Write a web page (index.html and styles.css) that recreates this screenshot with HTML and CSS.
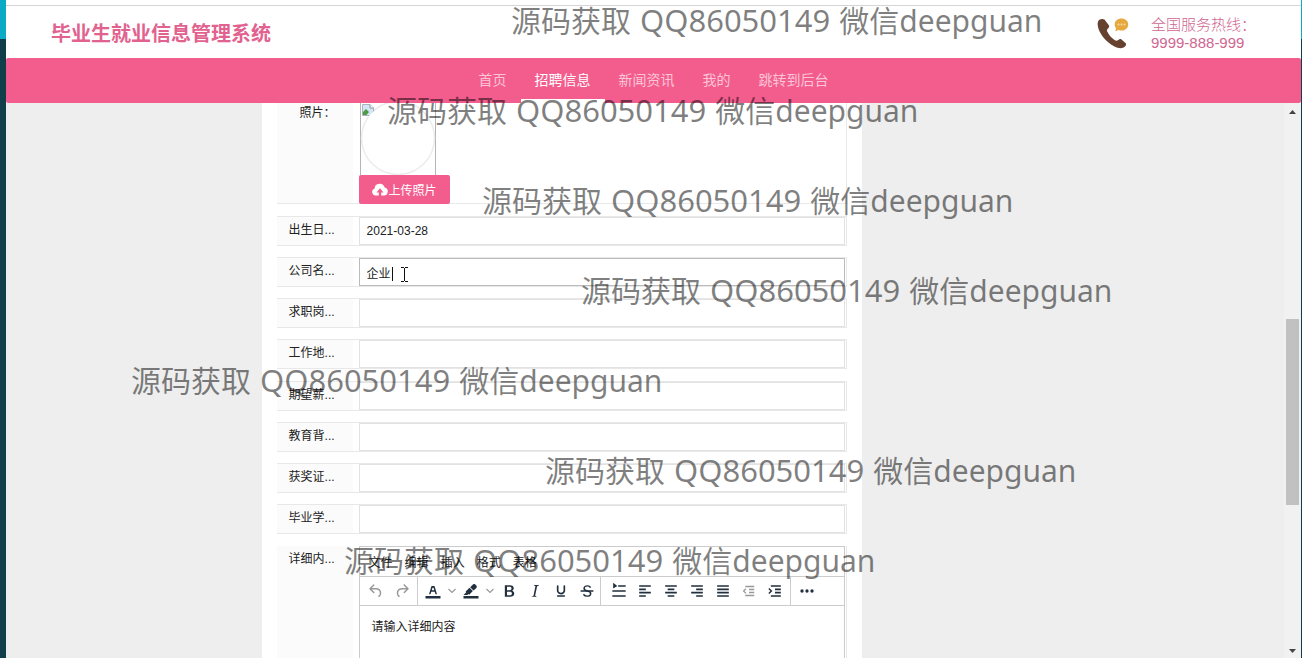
FILE: index.html
```html
<!DOCTYPE html>
<html lang="zh-CN">
<head>
<meta charset="utf-8">
<title>毕业生就业信息管理系统</title>
<link rel="stylesheet" href="styles.css">
</head>
<body>
<div class="desktop">
  <div class="app">
    <header class="header">
      <h1 class="brand">毕业生就业信息管理系统</h1>
      <div class="hotline">
        <svg class="hotline-icon" width="32" height="32" viewBox="0 0 32 32" aria-hidden="true">
          <path fill="#67412f" d="M2 2C3.500 1 6 0.600 7.500 1.600L12 7.500C12.500 8.500 12 9.500 11 10.500C9.500 12 9.800 13 10.500 14C12 17 14.500 20 17.500 22C19 23 20 23 21.300 22C22.500 21 23.500 20.800 24.500 21.500L28.500 25C29.500 26 29 27.500 28 28.500C25.500 31 21.500 30.600 17.500 28.500C9 24 2.500 16 1 9C0.400 6 0.500 3.500 2 2Z"/>
          <path fill="#e5a93f" d="M24.500 0.500C28.300 0.500 31.200 3 31.200 6.500S28.300 12.600 24.500 12.600C23.500 12.600 22.500 12.500 21.700 12.100L18.300 13.300L19 10.200C18.200 9.200 17.700 8 17.700 6.500C17.700 3 20.700 0.500 24.500 0.500Z"/>
          <g fill="#f9dda4"><circle cx="21.500" cy="6.500" r="1"/><circle cx="24.500" cy="6.500" r="1"/><circle cx="27.500" cy="6.500" r="1"/></g>
        </svg>
        <p class="hotline-text">全国服务热线：<br>9999-888-999</p>
      </div>
    </header>
    <nav class="nav">
      <a href="#">首页</a>
      <a href="#" class="active">招聘信息</a>
      <a href="#">新闻资讯</a>
      <a href="#">我的</a>
      <a href="#">跳转到后台</a>
    </nav>
    <div class="viewport">
      <main class="content">
        <form class="panel">
          <div class="row photo-row">
            <span class="label photo-label">照片：</span>
            <div class="photo-field">
              <svg class="photo" width="76" height="72" viewBox="0 0 76 72" role="img" aria-label="照片">
                <path d="M.5 0V72M75.500 0V72" stroke="#b5b5b5"/>
                <circle cx="38" cy="35" r="36.500" fill="none" stroke="#ececec" stroke-width="1.500"/>
                <path d="M2.500 1.500H10L13.500 5V12.500H2.500Z" fill="#d5e5f6" stroke="#aab3bd"/>
                <path d="M3 12V9L6 6L9 9L6.500 12Z" fill="#4b9b43"/><path d="M8 14L14 8V14Z" fill="#fff"/><path d="M10 1.500V5H13.500" fill="#fff" stroke="#8f999f"/>
              </svg>
              <button type="button" class="upload">
                <svg width="16" height="14" viewBox="0 0 16 14" aria-hidden="true"><path fill="#fff" fill-rule="evenodd" d="M4 12.500A3.600 3.600 0 0 1 2.600 5.500A5.100 5.100 0 0 1 12.600 4.600A4 4 0 0 1 12 12.500H9.200V9.500H11.500L8 5.200L4.500 9.500H6.800V12.500Z"/></svg>上传照片
              </button>
            </div>
          </div>
          <div class="group">
            <div class="row"><label class="label" for="birth">出生日...</label><input id="birth" type="text" value="2021-03-28"></div>
            <div class="row"><label class="label" for="company">公司名...</label><input id="company" class="focused" type="text" value="企业">
              <svg class="pointer" width="20" height="18" viewBox="0 0 20 18" aria-hidden="true"><path d="M1.500 2V16M10 2.500H13M14 2.500H17M13.500 3V16M10 16.500H13M14 16.500H17" fill="none" stroke="#111"/></svg>
            </div>
            <div class="row"><label class="label" for="job">求职岗...</label><input id="job" type="text"></div>
            <div class="row"><label class="label" for="place">工作地...</label><input id="place" type="text"></div>
          </div>
          <div class="group">
            <div class="row"><label class="label" for="salary">期望薪...</label><input id="salary" type="text"></div>
            <div class="row"><label class="label" for="education">教育背...</label><input id="education" type="text"></div>
            <div class="row"><label class="label" for="award">获奖证...</label><input id="award" type="text"></div>
            <div class="row"><label class="label" for="school">毕业学...</label><input id="school" type="text"></div>
          </div>
          <div class="row editor-row">
            <label class="label" for="detail">详细内...</label>
            <div class="editor">
              <div class="menubar">
                <button type="button">文件</button><button type="button">编辑</button><button type="button">插入</button><button type="button">格式</button><button type="button">表格</button>
              </div>
              <div class="toolbar">
                <div class="tools history">
                  <button type="button" class="muted" aria-label="撤销"><svg viewBox="0 0 24 24"><path d="M6.400 8H12c3.700 0 6.200 2 6.800 5.100.6 2.700-.4 5.600-2.300 6.800a1 1 0 0 1-1-1.800c1.100-.6 1.800-2.700 1.400-4.600-.5-2.100-2.100-3.500-4.900-3.500H6.400l3.300 3.300a1 1 0 1 1-1.400 1.400l-5-5a1 1 0 0 1 0-1.400l5-5a1 1 0 0 1 1.400 1.400L6.400 8Z"/></svg></button>
                  <button type="button" class="muted" aria-label="重做"><svg viewBox="0 0 24 24"><path d="M17.600 10H12c-2.800 0-4.400 1.400-4.900 3.500-.4 2 .3 4 1.400 4.600a1 1 0 1 1-1 1.800c-2-1.200-2.900-4.100-2.300-6.800.6-3 3-5.100 6.800-5.100h5.600l-3.300-3.300a1 1 0 1 1 1.400-1.400l5 5a1 1 0 0 1 0 1.400l-5 5a1 1 0 0 1-1.400-1.400l3.300-3.300Z"/></svg></button>
                </div>
                <div class="tools format">
                  <button type="button" aria-label="文字颜色"><svg viewBox="0 0 24 24"><path d="M3 18h18v3H3zM8.700 16h-.8a.5.5 0 0 1-.5-.6l2.700-9c.1-.3.3-.4.500-.4h2.800c.2 0 .4.100.5.400l2.700 9a.5.5 0 0 1-.5.600h-.8a.5.5 0 0 1-.4-.4l-.7-2.200c0-.3-.3-.4-.5-.4h-3.400c-.2 0-.4.100-.5.400l-.7 2.200c0 .3-.2.400-.4.400Zm2.600-7.600-.6 2a.5.5 0 0 0 .5.600h1.600a.5.5 0 0 0 .5-.6l-.6-2c0-.3-.3-.4-.5-.4h-.4c-.2 0-.4.100-.5.400Z"/></svg></button>
                  <button type="button" class="arrow" aria-label="选择文字颜色"><svg viewBox="0 0 10 10"><path d="M1.500 3L5 6.500L8.500 3" fill="none" stroke="#999" stroke-width="1.200"/></svg></button>
                  <button type="button" aria-label="背景颜色"><svg viewBox="0 0 24 24"><path d="M3 18h18v3H3zM7.700 16.700H3l3.300-3.300-.7-.8L10.200 8l4 4.100-4 4.200c-.2.200-.6.200-.8 0l-.6-.7-1.100 1.100ZM11 7.500l3-3.100c.8-.8 2-1 2.900-.4l1.700 1.700c.6.8.500 2-.4 2.900L15 11.500z"/></svg></button>
                  <button type="button" class="arrow" aria-label="选择背景颜色"><svg viewBox="0 0 10 10"><path d="M1.500 3L5 6.500L8.500 3" fill="none" stroke="#999" stroke-width="1.200"/></svg></button>
                  <button type="button" aria-label="粗体"><svg viewBox="0 0 24 24"><path d="M7 5h6c3 0 4.700 1.300 4.700 3.600 0 1.500-.9 2.600-2.300 3.100 1.800.4 2.900 1.600 2.900 3.400 0 2.600-2 3.900-5 3.900H7Zm2.600 2v4h3c1.600 0 2.400-.7 2.400-2s-.9-2-2.400-2Zm0 5.800V17h3.300c1.700 0 2.600-.7 2.600-2.100s-.9-2.100-2.600-2.100Z"/></svg></button>
                  <button type="button" aria-label="斜体"><svg viewBox="0 0 24 24"><path d="m16.700 4.700-.1.900h-.3c-.6 0-1 0-1.400.3-.3.300-.4.600-.5 1.100l-2.100 9.800v.6c0 .5.400.8 1.400.8h.2l-.2.800H8l.2-.8h.2c1.100 0 1.800-.5 2-1.500l2-9.800.1-.5c0-.6-.4-.8-1.400-.8h-.3l.2-.9h5.800Z"/></svg></button>
                  <button type="button" aria-label="下划线"><svg viewBox="0 0 24 24"><path d="M16 5c.6 0 1 .4 1 1v5.500a4 4 0 0 1-.4 1.800l-1 1.400a5.300 5.300 0 0 1-5.500 1 5 5 0 0 1-1.600-1c-.5-.4-.8-.9-1.100-1.400a4 4 0 0 1-.4-1.800V6c0-.6.4-1 1-1s1 .4 1 1v5.500c0 .3 0 .6.200 1l.6.700a3.300 3.300 0 0 0 2.200.8 3.400 3.400 0 0 0 2.200-.8c.3-.2.400-.5.600-.8l.2-.9V6c0-.6.400-1 1-1ZM8 17h8c.6 0 1 .4 1 1s-.4 1-1 1H8a1 1 0 0 1 0-2Z"/></svg></button>
                  <button type="button" aria-label="删除线"><svg viewBox="0 0 24 24"><path d="M15.600 8.500c-.5-.7-1-1.100-1.300-1.300-.6-.4-1.300-.6-2-.6-2.700 0-2.800 1.700-2.800 2.100 0 1.600 1.800 2 3.200 2.300 4.400.9 4.600 2.800 4.600 3.900 0 1.400-.7 4.100-5 4.100A6.200 6.200 0 0 1 7 16.400l1.500-1.100c.4.600 1.600 2 3.700 2 1.600 0 2.500-.4 3-1.200.4-.8.300-2-.8-2.600-.7-.4-1.600-.7-2.900-1-1-.2-3.900-.8-3.900-3.600C7.600 6 10.300 5 12.400 5c2.900 0 4.200 1.600 4.700 2.400l-1.500 1.100Z"/><path d="M5 11h14a1 1 0 0 1 0 2H5a1 1 0 0 1 0-2Z"/></svg></button>
                </div>
                <div class="tools align">
                  <button type="button" aria-label="行高"><svg viewBox="0 0 24 24"><path d="M11 5h9v2h-9zM4 11h16v2H4zM4 17h16v2H4zM5 2l5 4-5 3z"/></svg></button>
                  <button type="button" aria-label="左对齐"><svg viewBox="0 0 24 24"><path d="M5 5h14v2H5zM5 9h8v2H5zM5 13h14v2H5zM5 17h8v2H5z"/></svg></button>
                  <button type="button" aria-label="居中"><svg viewBox="0 0 24 24"><path d="M5 5h14v2H5zM8 9h8v2H8zM5 13h14v2H5zM8 17h8v2H8z"/></svg></button>
                  <button type="button" aria-label="右对齐"><svg viewBox="0 0 24 24"><path d="M5 5h14v2H5zM11 9h8v2h-8zM5 13h14v2H5zM11 17h8v2h-8z"/></svg></button>
                  <button type="button" aria-label="两端对齐"><svg viewBox="0 0 24 24"><path d="M5 5h14v2H5zM5 9h14v2H5zM5 13h14v2H5zM5 17h14v2H5z"/></svg></button>
                  <button type="button" class="muted" aria-label="减少缩进"><svg viewBox="0 0 24 24"><path d="M7 5h12v2H7zM12 9h7v2h-7zM12 13h7v2h-7zM7 17h12v2H7zM8.500 9.500 6 12l2.500 2.500-1.200 1.200L3.600 12l3.700-3.700z"/></svg></button>
                  <button type="button" aria-label="增加缩进"><svg viewBox="0 0 24 24"><path d="M7 5h12v2H7zM12 9h7v2h-7zM12 13h7v2h-7zM7 17h12v2H7zM4 9.500 6.500 12 4 14.500l1.200 1.200L8.900 12 5.200 8.300z"/></svg></button>
                </div>
                <div class="tools more">
                  <button type="button" aria-label="更多"><svg viewBox="0 0 24 24"><circle cx="6" cy="12" r="2"/><circle cx="12" cy="12" r="2"/><circle cx="18" cy="12" r="2"/></svg></button>
                </div>
              </div>
              <textarea id="detail">请输入详细内容</textarea>
            </div>
          </div>
        </form>
      </main>
      <div class="scrollbar" aria-hidden="true">
        <svg width="7" height="4" viewBox="0 0 7 4"><path d="M0 4L3.500 0L7 4Z" fill="#444"/></svg>
        <div class="track"><div class="thumb"></div></div>
        <svg width="7" height="4" viewBox="0 0 7 4"><path d="M0 0L3.500 4L7 0Z" fill="#444"/></svg>
      </div>
    </div>
  </div>
  <div class="mark mark-1"><span>源码获取</span><span class="number">QQ86050149</span><span>微信deepguan</span></div>
  <div class="mark mark-2"><span>源码获取</span><span class="number">QQ86050149</span><span>微信deepguan</span></div>
  <div class="mark mark-3"><span>源码获取</span><span class="number">QQ86050149</span><span>微信deepguan</span></div>
  <div class="mark mark-4"><span>源码获取</span><span class="number">QQ86050149</span><span>微信deepguan</span></div>
  <div class="mark mark-5"><span>源码获取</span><span class="number">QQ86050149</span><span>微信deepguan</span></div>
  <div class="mark mark-6"><span>源码获取</span><span class="number">QQ86050149</span><span>微信deepguan</span></div>
  <div class="mark mark-7"><span>源码获取</span><span class="number">QQ86050149</span><span>微信deepguan</span></div>
</div>
</body>
</html>
```
FILE: styles.css
```css
* { box-sizing: border-box; }

body {
  margin: 0;
  font-family: "Liberation Sans", "Noto Sans CJK SC", sans-serif;
  font-size: 12px;
  color: #222;
}

button, input, textarea { font: inherit; color: inherit; margin: 0; }
button { padding: 0; border: 0; background: none; }

.desktop {
  position: relative;
  height: 100vh;
  overflow: hidden;
  padding: 0 1px 0 6px;
  background: linear-gradient(#0cabc5 39px, #103e4b 39px);
}

.app {
  display: flex;
  flex-direction: column;
  height: 100%;
  padding-top: 5px;
  background: #fff;
}

.header {
  display: flex;
  flex: none;
  justify-content: space-between;
  align-items: center;
  height: 53px;
  padding: 3px 45px 0;
  border-top: 1px solid #d5d5d5;
}

.brand { margin: 0; font-size: 20px; font-weight: 700; line-height: 28px; color: #e2628f; }
.hotline { display: flex; gap: 22px; align-items: center; }
.hotline-text { margin: 0; font-size: 15px; font-weight: 300; line-height: 18px; color: #cf6690; white-space: nowrap; }

.nav {
  display: flex;
  flex: none;
  justify-content: center;
  height: 45px;
  background: #f35d8e;
  border-radius: 2px;
}

.nav a {
  padding: 0 14px;
  border-bottom: 4px solid transparent;
  font-size: 14px;
  line-height: 45px;
  color: #fbc4d7;
  text-decoration: none;
}

.nav .active { color: #fff; border-bottom-color: #fff; }

.viewport { display: flex; flex: 1; min-height: 0; background: #eee; }
.content { flex: 1; overflow: hidden; }

.panel {
  display: flex;
  flex-direction: column;
  gap: 12px;
  width: 600px;
  margin-left: 20%;
  padding: 0 15px;
  background: #fff;
}

.group { display: flex; flex-direction: column; gap: 11px; }

.row {
  position: relative;
  display: flex;
  height: 30px;
  border: 1px solid #e8e8e8;
  border-left: 0;
  background: #fff;
}

.label {
  flex: none;
  width: 76px;
  margin-right: 6px;
  padding-left: 12px;
  line-height: 26px;
  background: #fbfbfb;
}

.row input {
  flex: 1;
  min-width: 0;
  margin-right: 1px;
  padding: 0 7px;
  border: 1px solid #e2e2e2;
  background: #fff;
  outline: 0;
}

.row .focused { border-color: #bbb; }
.pointer { position: absolute; left: 114px; top: 7px; }

.photo-row { height: 101px; border-top: 0; }
.photo-label { padding-left: 23px; line-height: 20px; }
.photo-field { display: flex; flex-direction: column; align-items: flex-start; }
.photo { flex: none; margin-left: 1px; }

.upload {
  display: flex;
  flex: none;
  gap: 1px;
  align-items: center;
  height: 29px;
  padding: 0 13px;
  border-radius: 2px;
  background: #f35d8e;
  color: #fff;
}

.editor-row { height: auto; border-top: 0; }

.editor {
  display: flex;
  flex: 1;
  flex-direction: column;
  margin-right: 1px;
  border: 1px solid #ccc;
}

.menubar { display: flex; gap: 12px; height: 30px; padding-left: 9px; border-bottom: 1px solid #ccc; }

.toolbar { display: flex; height: 29px; border-bottom: 1px solid #ccc; }
.tools { display: flex; align-items: center; border-right: 1px solid #ccc; }
.tools button { display: flex; justify-content: center; width: 26px; }
.tools svg { width: 20px; height: 20px; fill: #222f3e; }
.tools .arrow { width: 12px; }
.tools .arrow svg { width: 10px; height: 10px; }
.tools .muted svg { width: 18px; fill: #999; }
.history { padding: 0 2px 0 3px; }
.format { padding: 0 0 0 2px; }
.align { padding: 0 2px 0 5px; }
.more { padding-left: 3px; border-right: 0; }

.editor textarea {
  height: 160px;
  padding: 12px;
  border: 0;
  outline: 0;
  resize: none;
  line-height: 18px;
}

.scrollbar {
  display: flex;
  flex-direction: column;
  align-items: center;
  width: 17px;
  padding: 7px 0 5px;
  background: #f1f1f1;
}

.track { flex: 1; width: 13px; padding-top: 205px; }
.thumb { height: 186px; background: #c1c1c1; }

.mark {
  position: absolute;
  display: flex;
  gap: 9px;
  align-items: baseline;
  font-family: "Noto Sans", "Noto Sans CJK SC", sans-serif;
  font-size: 30px;
  line-height: 40px;
  color: rgba(0, 0, 0, 0.5);
  white-space: nowrap;
  pointer-events: none;
}

.mark .number { font-size: 31px; }
.mark-1 { left: 511px; top: 0; }
.mark-2 { left: 387px; top: 90px; }
.mark-3 { left: 482px; top: 180px; }
.mark-4 { left: 581px; top: 270px; }
.mark-5 { left: 131px; top: 360px; }
.mark-6 { left: 545px; top: 450px; }
.mark-7 { left: 344px; top: 540px; }
```
